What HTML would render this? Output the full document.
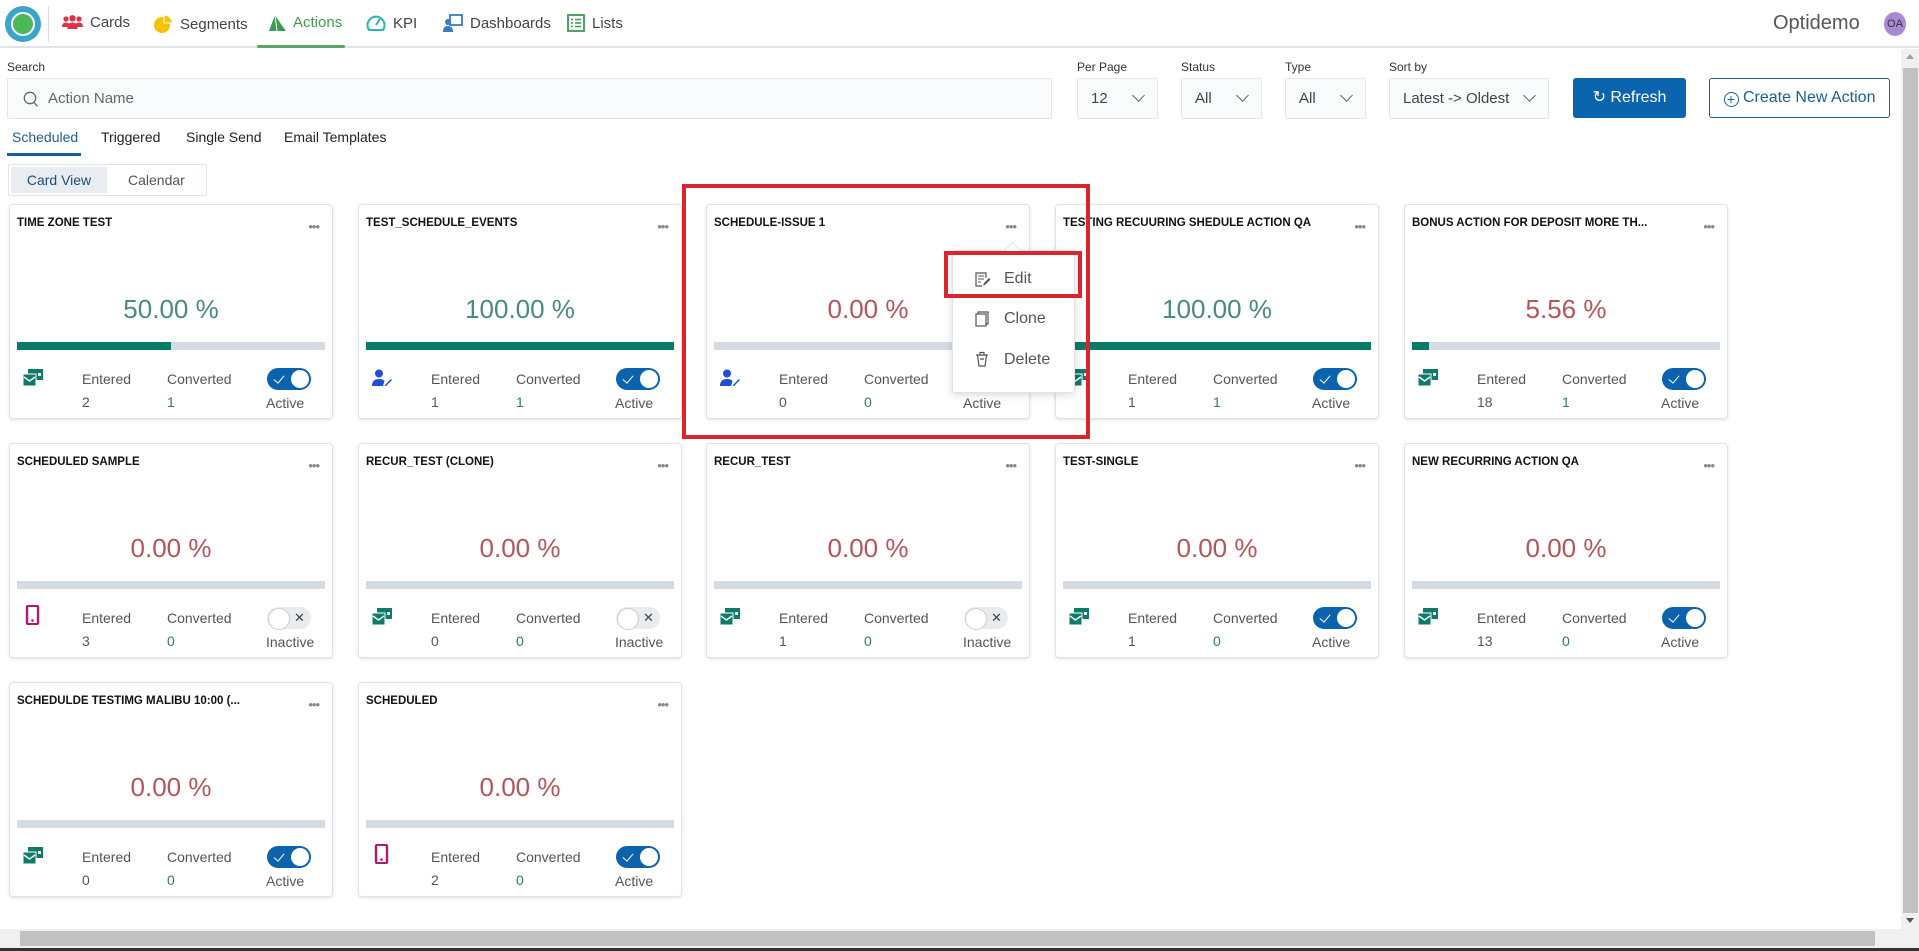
<!DOCTYPE html>
<html><head><meta charset="utf-8">
<style>
*{box-sizing:border-box;margin:0;padding:0}
body{width:1919px;height:951px;overflow:hidden;background:#fff;font-family:"Liberation Sans",sans-serif;color:#333;position:relative}
.abs{position:absolute}
.nav{position:absolute;left:0;top:0;width:1919px;height:48px;border-bottom:2px solid #dfe3ea;background:#fff}
.ni{position:absolute;top:14px;font-size:15px;color:#444;display:flex;align-items:center;gap:7px}
.lbl{position:absolute;top:60px;font-size:12px;color:#333}
.inp{position:absolute;top:78px;height:41px;border:1px solid #e3e6ea;background:#fafbfc;border-radius:2px;font-size:15px;color:#444}
.sel span{position:absolute;left:13px;top:11px}
.sel i{position:absolute;right:14px;top:12px;width:9px;height:9px;border-right:1.3px solid #666;border-bottom:1.3px solid #666;transform:rotate(45deg)}
.tab{position:absolute;top:129px;font-size:14px;color:#222}
.card{position:absolute;width:324px;height:215px;border:1px solid #e1e3e6;border-radius:4px;background:#fff;box-shadow:0 1px 3px rgba(0,0,0,.12)}
.card .t{position:absolute;left:7px;top:12px;font-size:11.5px;font-weight:bold;color:#111;white-space:nowrap}
.card .d{position:absolute;right:13px;top:14px;font-size:13px;color:#888;letter-spacing:-1px}
.card .p{position:absolute;left:0;width:100%;top:89px;text-align:center;font-size:26px}
.g{color:#4a8a7e}.r{color:#b5555a}
.card .b{position:absolute;left:7px;right:7px;top:137px;height:8px;background:#d5dbe3}
.card .b div{height:100%;background:#0b7a6a}
.card .ic{position:absolute;left:13px;top:164px}
.card .e{position:absolute;left:72px;top:166px;font-size:14px;color:#555}
.card .c{position:absolute;left:157px;top:166px;font-size:14px;color:#555}
.card .en{position:absolute;left:72px;top:189px;font-size:14px;color:#555}
.card .cn{position:absolute;left:157px;top:189px;font-size:14px;color:#2b7a6f}
.tg{position:absolute;left:257px;top:163px;width:44px;height:22px;border-radius:11px}
.tg.on{background:#0b63ad}
.tg.on:after{content:"";position:absolute;right:2px;top:2px;width:18px;height:18px;border-radius:50%;background:#fff}
.tg.on:before{content:"";position:absolute;left:9px;top:5px;width:5px;height:9px;border-right:1.3px solid #fff;border-bottom:1.3px solid #fff;transform:rotate(40deg)}
.tg.off{background:#e9ecef}
.tg.off:after{content:"";position:absolute;left:1px;top:1px;width:20px;height:20px;border-radius:50%;background:#fff;border:1px solid #ccc}
.tg.off b{position:absolute;left:27px;top:3px;font-size:13px;font-weight:normal;color:#444}
.card .a{position:absolute;left:256px;top:190px;font-size:14px;color:#555}
</style></head><body>
<svg width="0" height="0" style="position:absolute"><defs>
<symbol id="em" viewBox="0 0 20 17"><rect x="5" y="0" width="15" height="11" fill="#0e7a6a"/><rect x="15" y="4" width="3" height="3" fill="#fff"/><rect x="0" y="5" width="13" height="12" fill="#0e7a6a" stroke="#fff" stroke-width="1"/><path d="M1 8 L6.5 12 L12 8" stroke="#fff" stroke-width="1.4" fill="none"/></symbol>
<symbol id="us" viewBox="0 0 20 17"><circle cx="7" cy="4.5" r="4" fill="#1f4fd8"/><path d="M0 17 Q0 10 7 10 Q11 10 12.5 12 L11 17Z" fill="#1f4fd8"/><path d="M13 16 L19 10 L20 11 L14 17 L12.5 17.5Z" fill="#1f4fd8"/></symbol>
<symbol id="ph" viewBox="0 0 20 20"><rect x="4" y="0.8" width="11" height="18.4" rx="1.5" fill="none" stroke="#b3186f" stroke-width="2.4"/><circle cx="9.5" cy="15.5" r="1.3" fill="#b3186f"/></symbol>
</defs></svg>

<div class="nav">
 <div class="abs" style="left:5px;top:6px;width:36px;height:36px;border-radius:50%;background:#3aa5c8"></div>
 <div class="abs" style="left:11px;top:12px;width:24px;height:24px;border-radius:50%;background:#4cb85a;border:2px solid #fff"></div>
 <div class="abs" style="left:48px;top:6px;width:1px;height:36px;background:#ddd"></div>
 <div class="ni" style="left:62px"><svg width="21" height="15" viewBox="0 0 21 15"><circle cx="4" cy="4" r="2.6" fill="#d8334a"/><circle cx="10.5" cy="3.3" r="3.2" fill="#d8334a"/><circle cx="17" cy="4" r="2.6" fill="#d8334a"/><path d="M0 12 Q0 7.5 4 7.5 Q8 7.5 8 12Z M5.5 14 Q5.5 7.5 10.5 7.5 Q15.5 7.5 15.5 14Z M13 12 Q13 7.5 17 7.5 Q21 7.5 21 12Z" fill="#d8334a"/></svg>Cards</div>
 <div class="ni" style="left:153px"><svg width="20" height="20" viewBox="0 0 20 20"><circle cx="9" cy="11" r="8" fill="#f5c400"/><path d="M11 1 A8 8 0 0 1 19 9 L11 9Z" fill="#f5c400" stroke="#fff" stroke-width="1"/></svg>Segments</div>
 <div class="ni" style="left:268px;color:#3f9b52"><svg width="18" height="16" viewBox="0 0 18 16"><path d="M1 16 L7 0 Q12 8 18 16Z" fill="#3f9b52"/><path d="M7 0 L9 16" stroke="#fff" stroke-width="1"/></svg>Actions</div>
 <div class="abs" style="left:257px;top:45px;width:88px;height:3px;background:#5aa865;border-radius:2px"></div>
 <div class="ni" style="left:366px"><svg width="20" height="18" viewBox="0 0 20 18"><path d="M3 16 A8.5 8.5 0 1 1 17 16Z" fill="none" stroke="#2ab5b0" stroke-width="2"/><path d="M10 11 L14 5" stroke="#2ab5b0" stroke-width="2"/></svg>KPI</div>
 <div class="ni" style="left:443px"><svg width="20" height="18" viewBox="0 0 20 18"><rect x="7" y="1" width="12" height="10" fill="none" stroke="#3a7cc0" stroke-width="1.8"/><circle cx="5" cy="8" r="3" fill="#3a7cc0"/><path d="M0 18 Q0 12 5 12 Q10 12 10 18Z" fill="#3a7cc0"/></svg>Dashboards</div>
 <div class="ni" style="left:567px"><svg width="18" height="18" viewBox="0 0 18 18"><rect x="1" y="1" width="16" height="16" fill="none" stroke="#3c9b53" stroke-width="1.8"/><path d="M4 5.5h2M8 5.5h6M4 9h2M8 9h6M4 12.5h2M8 12.5h6" stroke="#3c9b53" stroke-width="1.6"/></svg>Lists</div>
 <div class="abs" style="left:1773px;top:12px;font-size:20px;color:#555">Optidemo</div>
 <div class="abs" style="left:1884px;top:12px;width:22px;height:24px;border-radius:50%;background:#a98ad1;font-size:11px;color:#333;text-align:center;line-height:24px">OA</div>
</div>

<div class="lbl" style="left:7px">Search</div>
<div class="inp" style="left:7px;width:1045px"><svg class="abs" style="left:15px;top:12px" width="16" height="17" viewBox="0 0 16 17"><circle cx="7" cy="7" r="5.7" fill="none" stroke="#666" stroke-width="1.3"/><path d="M11 11.5 L14.5 15.5" stroke="#666" stroke-width="1.3"/></svg><span class="abs" style="left:40px;top:11px;color:#666">Action Name</span></div>

<div class="lbl" style="left:1077px">Per Page</div>
<div class="inp sel" style="left:1077px;width:81px"><span>12</span><i></i></div>
<div class="lbl" style="left:1181px">Status</div>
<div class="inp sel" style="left:1181px;width:81px"><span>All</span><i></i></div>
<div class="lbl" style="left:1285px">Type</div>
<div class="inp sel" style="left:1285px;width:81px"><span>All</span><i></i></div>
<div class="lbl" style="left:1389px">Sort by</div>
<div class="inp sel" style="left:1389px;width:160px"><span>Latest -&gt; Oldest</span><i></i></div>
<div class="abs" style="left:1573px;top:78px;width:113px;height:40px;background:#0b65ae;border-radius:3px;color:#fff;font-size:16px;line-height:40px;text-align:center">&#8635; Refresh</div>
<div class="abs" style="left:1709px;top:78px;width:181px;height:40px;border:1px solid #1a5f97;border-radius:3px;color:#1a5f97;font-size:16px;line-height:38px;text-align:center"><span style="display:inline-block;width:15px;height:15px;border:1.3px solid #1a5f97;border-radius:50%;font-size:14px;line-height:12px;vertical-align:-2px">+</span> Create New Action</div>

<div class="tab" style="left:12px;color:#1b5e93">Scheduled</div>
<div class="abs" style="left:7px;top:153px;width:74px;height:3px;background:#1b5e93"></div>
<div class="tab" style="left:101px">Triggered</div>
<div class="tab" style="left:186px">Single Send</div>
<div class="tab" style="left:284px">Email Templates</div>

<div class="abs" style="left:8px;top:164px;width:199px;height:32px;border:1px solid #e1e4e8;border-radius:2px"></div>
<div class="abs" style="left:11px;top:167px;width:96px;height:26px;background:#e9edf2;font-size:14px;color:#1b4d78;text-align:center;line-height:26px">Card View</div>
<div class="abs" style="left:128px;top:167px;font-size:14px;color:#555;line-height:26px">Calendar</div>

<!-- Row 1 -->
<div class="card" style="left:9px;top:204px"><div class="t">TIME ZONE TEST</div><div class="d">•••</div><div class="p g">50.00 %</div><div class="b"><div style="width:50%"></div></div><svg class="ic" width="20" height="17"><use href="#em"/></svg><div class="e">Entered</div><div class="c">Converted</div><div class="en">2</div><div class="cn">1</div><div class="tg on"></div><div class="a">Active</div></div>
<div class="card" style="left:358px;top:204px"><div class="t">TEST_SCHEDULE_EVENTS</div><div class="d">•••</div><div class="p g">100.00 %</div><div class="b"><div style="width:100%"></div></div><svg class="ic" width="20" height="17"><use href="#us"/></svg><div class="e">Entered</div><div class="c">Converted</div><div class="en">1</div><div class="cn">1</div><div class="tg on"></div><div class="a">Active</div></div>
<div class="card" style="left:706px;top:204px"><div class="t">SCHEDULE-ISSUE 1</div><div class="d">•••</div><div class="p r">0.00 %</div><div class="b"><div style="width:0"></div></div><svg class="ic" width="20" height="17"><use href="#us"/></svg><div class="e">Entered</div><div class="c">Converted</div><div class="en">0</div><div class="cn">0</div><div class="tg on"></div><div class="a">Active</div></div>
<div class="card" style="left:1055px;top:204px"><div class="t">TESTING RECUURING SHEDULE ACTION QA</div><div class="d">•••</div><div class="p g">100.00 %</div><div class="b"><div style="width:100%"></div></div><svg class="ic" width="20" height="17"><use href="#em"/></svg><div class="e">Entered</div><div class="c">Converted</div><div class="en">1</div><div class="cn">1</div><div class="tg on"></div><div class="a">Active</div></div>
<div class="card" style="left:1404px;top:204px"><div class="t">BONUS ACTION FOR DEPOSIT MORE TH...</div><div class="d">•••</div><div class="p r">5.56 %</div><div class="b"><div style="width:5.6%"></div></div><svg class="ic" width="20" height="17"><use href="#em"/></svg><div class="e">Entered</div><div class="c">Converted</div><div class="en">18</div><div class="cn">1</div><div class="tg on"></div><div class="a">Active</div></div>

<!-- Row 2 -->
<div class="card" style="left:9px;top:443px"><div class="t">SCHEDULED SAMPLE</div><div class="d">•••</div><div class="p r">0.00 %</div><div class="b"></div><svg class="ic" width="20" height="20" style="top:161px"><use href="#ph"/></svg><div class="e">Entered</div><div class="c">Converted</div><div class="en">3</div><div class="cn">0</div><div class="tg off"><b>✕</b></div><div class="a">Inactive</div></div>
<div class="card" style="left:358px;top:443px"><div class="t">RECUR_TEST (CLONE)</div><div class="d">•••</div><div class="p r">0.00 %</div><div class="b"></div><svg class="ic" width="20" height="17"><use href="#em"/></svg><div class="e">Entered</div><div class="c">Converted</div><div class="en">0</div><div class="cn">0</div><div class="tg off"><b>✕</b></div><div class="a">Inactive</div></div>
<div class="card" style="left:706px;top:443px"><div class="t">RECUR_TEST</div><div class="d">•••</div><div class="p r">0.00 %</div><div class="b"></div><svg class="ic" width="20" height="17"><use href="#em"/></svg><div class="e">Entered</div><div class="c">Converted</div><div class="en">1</div><div class="cn">0</div><div class="tg off"><b>✕</b></div><div class="a">Inactive</div></div>
<div class="card" style="left:1055px;top:443px"><div class="t">TEST-SINGLE</div><div class="d">•••</div><div class="p r">0.00 %</div><div class="b"></div><svg class="ic" width="20" height="17"><use href="#em"/></svg><div class="e">Entered</div><div class="c">Converted</div><div class="en">1</div><div class="cn">0</div><div class="tg on"></div><div class="a">Active</div></div>
<div class="card" style="left:1404px;top:443px"><div class="t">NEW RECURRING ACTION QA</div><div class="d">•••</div><div class="p r">0.00 %</div><div class="b"></div><svg class="ic" width="20" height="17"><use href="#em"/></svg><div class="e">Entered</div><div class="c">Converted</div><div class="en">13</div><div class="cn">0</div><div class="tg on"></div><div class="a">Active</div></div>

<!-- Row 3 -->
<div class="card" style="left:9px;top:682px"><div class="t">SCHEDULDE TESTIMG MALIBU 10:00 (...</div><div class="d">•••</div><div class="p r">0.00 %</div><div class="b"></div><svg class="ic" width="20" height="17"><use href="#em"/></svg><div class="e">Entered</div><div class="c">Converted</div><div class="en">0</div><div class="cn">0</div><div class="tg on"></div><div class="a">Active</div></div>
<div class="card" style="left:358px;top:682px"><div class="t">SCHEDULED</div><div class="d">•••</div><div class="p r">0.00 %</div><div class="b"></div><svg class="ic" width="20" height="20" style="top:161px"><use href="#ph"/></svg><div class="e">Entered</div><div class="c">Converted</div><div class="en">2</div><div class="cn">0</div><div class="tg on"></div><div class="a">Active</div></div>

<!-- dropdown -->
<div class="abs" style="left:952px;top:250px;width:123px;height:143px;background:#fff;border:1px solid #e3e3e3;border-radius:3px;box-shadow:0 2px 8px rgba(0,0,0,.15)"></div>
<div class="abs" style="left:1007px;top:244px;width:11px;height:11px;background:#fff;border-left:1px solid #e3e3e3;border-top:1px solid #e3e3e3;transform:rotate(45deg)"></div>
<svg class="abs" style="left:975px;top:272px" width="16" height="15" viewBox="0 0 16 15"><path d="M11 6 V1 H1 V14 H7" fill="none" stroke="#555" stroke-width="1.2"/><path d="M3 4h6M3 7h6M3 10h3" stroke="#555" stroke-width="1.1"/><path d="M8 14 L9 11 L14 6 L15.5 7.5 L10.5 12.5Z" fill="#555"/></svg>
<div class="abs" style="left:1004px;top:270px;font-size:16px;color:#555">Edit</div>
<svg class="abs" style="left:975px;top:311px" width="14" height="16" viewBox="0 0 14 16"><path d="M3 3 V1 H13 V13 H11" fill="none" stroke="#555" stroke-width="1.2"/><rect x="1" y="3" width="10" height="12" fill="none" stroke="#555" stroke-width="1.2"/></svg>
<div class="abs" style="left:1004px;top:310px;font-size:16px;color:#555">Clone</div>
<svg class="abs" style="left:975px;top:351px" width="14" height="16" viewBox="0 0 14 16"><path d="M1 4 H13 M5 4 V1.5 H9 V4 M2.5 4 L4 15 H10 L11.5 4 M5 8 H9" fill="none" stroke="#555" stroke-width="1.2"/></svg>
<div class="abs" style="left:1004px;top:351px;font-size:16px;color:#555">Delete</div>

<!-- red highlight boxes -->
<div class="abs" style="left:682px;top:184px;width:408px;height:255px;border:4px solid #d9262e"></div>
<div class="abs" style="left:944px;top:251px;width:138px;height:47px;border:4px solid #d9262e"></div>

<!-- scrollbars -->
<div class="abs" style="left:1901px;top:49px;width:18px;height:880px;background:#f0f0f0"></div>
<div class="abs" style="left:1903px;top:68px;width:15px;height:845px;background:#c1c1c1"></div>
<div class="abs" style="left:1906px;top:54px;width:0;height:0;border-left:4px solid transparent;border-right:4px solid transparent;border-bottom:5px solid #a0a0a0"></div>
<div class="abs" style="left:1906px;top:918px;width:0;height:0;border-left:4px solid transparent;border-right:4px solid transparent;border-top:5px solid #555"></div>
<div class="abs" style="left:0;top:929px;width:1919px;height:19px;background:#f0f0f0"></div>
<div class="abs" style="left:20px;top:931px;width:1855px;height:15px;background:#c1c1c1"></div>
<div class="abs" style="left:0;top:948px;width:1919px;height:3px;background:#333"></div>
</body></html>
